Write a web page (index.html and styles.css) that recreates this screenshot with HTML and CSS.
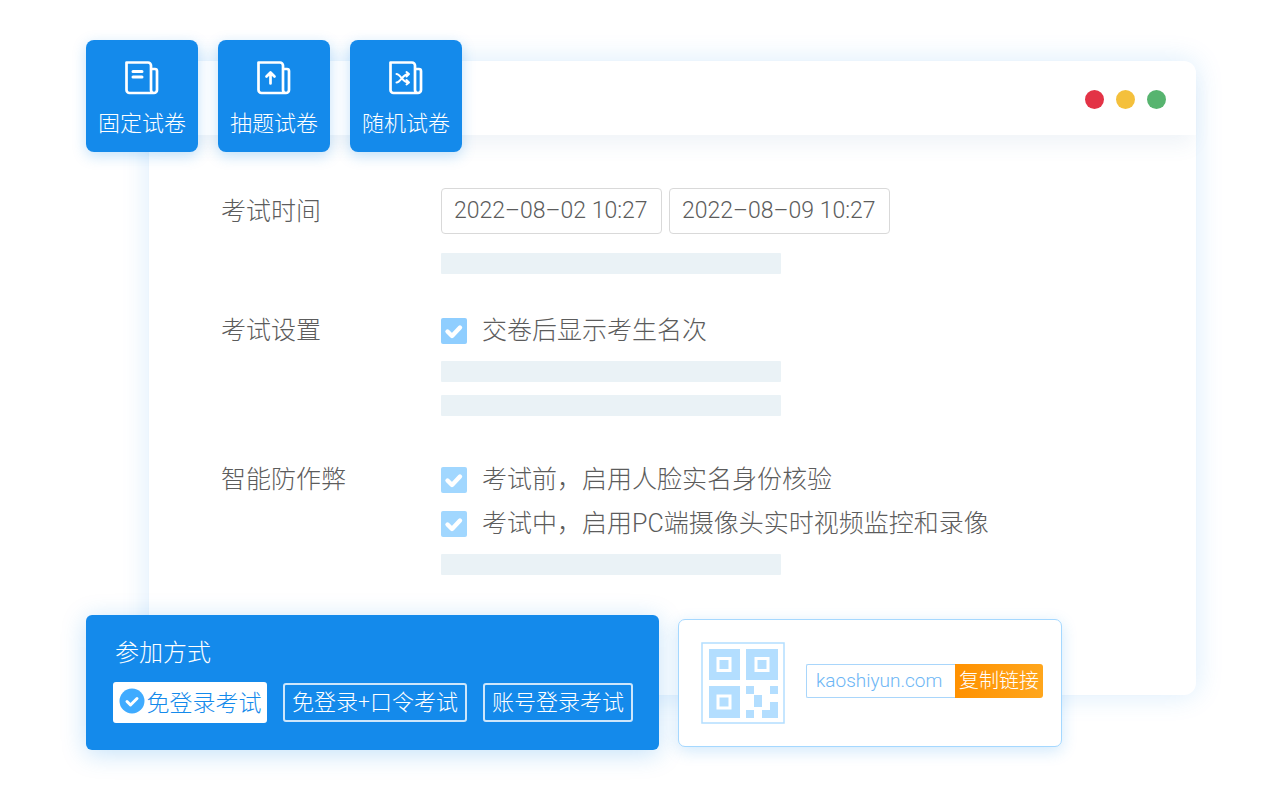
FILE: index.html
```html
<!DOCTYPE html>
<html lang="zh-CN">
<head>
<meta charset="utf-8">
<meta name="viewport" content="width=device-width, initial-scale=1">
<title>考试设置</title>
<link rel="stylesheet" href="styles.css">
</head>
<body>
<main class="scene">
  <nav class="tiles">
    <button type="button" class="tile">
      <svg class="tile-icon" viewBox="0 0 36 36" aria-hidden="true"><path d="M2.500 2.500H24a3 3 0 0 1 3 3V30a3 3 0 0 0 6 0V11a2 2 0 0 0-2-2h-4M2.500 2.500V30a3 3 0 0 0 3 3H30"/><path class="bold" d="M9 11.500h9M9 17h9"/></svg>
      <span>固定试卷</span>
    </button>
    <button type="button" class="tile">
      <svg class="tile-icon" viewBox="0 0 36 36" aria-hidden="true"><path d="M2.500 2.500H24a3 3 0 0 1 3 3V30a3 3 0 0 0 6 0V11a2 2 0 0 0-2-2h-4M2.500 2.500V30a3 3 0 0 0 3 3H30"/><path d="M14.500 23.500V13M10.500 16.500 14.500 12.500 18.500 16.500"/></svg>
      <span>抽题试卷</span>
    </button>
    <button type="button" class="tile">
      <svg class="tile-icon" viewBox="0 0 36 36" aria-hidden="true"><path d="M2.500 2.500H24a3 3 0 0 1 3 3V30a3 3 0 0 0 6 0V11a2 2 0 0 0-2-2h-4M2.500 2.500V30a3 3 0 0 0 3 3H30"/><path class="fine" d="M8.500 14c4 0 6 8.500 12 8.500M8.500 22.500c4.500 0 6-8.500 12-8.500M18.500 12l2.500 2-2.500 2.500M18.500 20l2.500 2.500-2.500 2"/></svg>
      <span>随机试卷</span>
    </button>
  </nav>

  <section class="window">
    <header class="window-bar">
      <span class="dot dot-red"></span>
      <span class="dot dot-yellow"></span>
      <span class="dot dot-green"></span>
    </header>
    <form class="form">
      <div class="row">
        <label class="row-label" for="start">考试时间</label>
        <div class="row-body">
          <div class="dates">
            <input class="date" id="start" type="text" value="2022–08–02 10:27">
            <input class="date" type="text" value="2022–08–09 10:27" aria-label="结束时间">
          </div>
          <div class="bar bar-far"></div>
        </div>
      </div>
      <div class="row">
        <span class="row-label">考试设置</span>
        <div class="row-body">
          <label class="check">
            <span class="box"><input type="checkbox" checked><svg viewBox="0 0 26 26" aria-hidden="true"><path d="M6.500 13.500l4.500 4.500L19 9.500"/></svg></span>
            <span>交卷后显示考生名次</span>
          </label>
          <div class="bar bar-near"></div>
          <div class="bar bar-next"></div>
        </div>
      </div>
      <div class="row">
        <span class="row-label">智能防作弊</span>
        <div class="row-body">
          <label class="check check-pale">
            <span class="box"><input type="checkbox" checked><svg viewBox="0 0 26 26" aria-hidden="true"><path d="M6.500 13.500l4.500 4.500L19 9.500"/></svg></span>
            <span>考试前，启用人脸实名身份核验</span>
          </label>
          <label class="check check-pale check-second">
            <span class="box"><input type="checkbox" checked><svg viewBox="0 0 26 26" aria-hidden="true"><path d="M6.500 13.500l4.500 4.500L19 9.500"/></svg></span>
            <span>考试中，启用PC端摄像头实时视频监控和录像</span>
          </label>
          <div class="bar bar-near"></div>
        </div>
      </div>
    </form>
  </section>

  <div class="cards">
    <fieldset class="modes">
      <legend class="modes-title">参加方式</legend>
      <div class="mode-list">
        <label class="mode mode-active">
          <input type="radio" name="mode" checked>
          <svg class="mode-icon" viewBox="0 0 26 26" aria-hidden="true"><circle cx="13" cy="13" r="12.500"/><path d="M8 13.500l3.500 3.500L18 10.500"/></svg>
          <span>免登录考试</span>
        </label>
        <label class="mode mode-wide"><input type="radio" name="mode"><span>免登录+口令考试</span></label>
        <label class="mode"><input type="radio" name="mode"><span>账号登录考试</span></label>
      </div>
    </fieldset>
    <section class="share">
      <svg class="qr" viewBox="0 0 84 82" role="img" aria-label="二维码">
        <rect class="frame" x="1" y="1" width="82" height="80"/>
        <path d="M8 7h31v31H8zM45 7h32v31H45zM8 44h31v32H8zM45 44h8v8h-8zM69 44h8v8h-8zM53 53h8v12h-8zM45 68h8v8h-8zM69 60h8v16H61v-8h8z"/>
        <path class="ring" d="M17 16.500h12v12H17zM55 16.500h12v12H55zM17 54h12v12H17z"/>
      </svg>
      <div class="link">
        <input class="link-url" type="text" value="kaoshiyun.com" aria-label="考试链接">
        <button type="button" class="link-copy">复制链接</button>
      </div>
    </section>
  </div>
</main>
</body>
</html>
```

FILE: styles.css
```css
* {
  box-sizing: border-box;
}

body {
  margin: 0;
  background: #fff;
  color: #5c5c5c;
  font-family: "Noto Sans CJK SC", sans-serif;
  font-size: 24px;
  font-weight: 300;
  line-height: 26px;
}

button,
input {
  font: inherit;
  color: inherit;
  margin: 0;
}

.scene {
  padding: 40px 84px;
}

.tiles {
  position: relative;
  z-index: 1;
  display: flex;
  gap: 20px;
  padding-left: 2px;
}

.tile {
  display: flex;
  flex-direction: column;
  align-items: center;
  gap: 11px;
  width: 112px;
  padding: 20px 0 17px;
  border: 0;
  border-radius: 8px;
  background: #148aeb;
  color: #fff;
  font-size: 22px;
  line-height: 28px;
  box-shadow: 0 4px 14px rgba(20, 138, 235, 0.25);
}

.tile-icon {
  width: 36px;
  height: 36px;
  fill: none;
  stroke: #fff;
  stroke-width: 2.7;
  stroke-linecap: round;
  stroke-linejoin: round;
}

.tile-icon .bold {
  stroke-width: 3;
}

.tile-icon .fine {
  stroke-width: 2;
}

.window {
  margin-top: -91px;
  margin-left: 65px;
  border-radius: 12px;
  background: #fff;
  box-shadow: 0 0 28px rgba(20, 138, 235, 0.16);
}

.window-bar {
  display: flex;
  justify-content: flex-end;
  align-items: center;
  gap: 12px;
  padding: 29px 30px 26px;
  border-radius: 12px 12px 0 0;
  box-shadow: 0 14px 20px -4px rgba(60, 110, 170, 0.08);
}

.dot {
  width: 19px;
  height: 19px;
  border-radius: 50%;
}

.dot-red {
  background: #e33346;
}

.dot-yellow {
  background: #f4c03c;
}

.dot-green {
  background: #57b46f;
}

.form {
  display: grid;
  gap: 44px;
  padding: 53px 72px 120px;
}

.row {
  display: grid;
  grid-template-columns: 220px 1fr;
}

.row:last-child {
  padding-top: 7px;
}

.row-label,
.check {
  font-family: Roboto, "Noto Sans CJK SC", sans-serif;
  font-size: 25px;
  line-height: 26px;
}

.row:first-child .row-label {
  padding-top: 11px;
}

.dates {
  display: flex;
  gap: 7px;
}

.date {
  width: 221px;
  height: 46px;
  padding: 0 11px 2px 12px;
  border: 1px solid #d9d9d9;
  border-radius: 4px;
  background: #fff;
  font-family: Roboto, "Liberation Sans", sans-serif;
  font-size: 23px;
}

.bar {
  max-width: 340px;
  height: 21px;
  border-radius: 1px;
  background: #eaf2f6;
}

.bar-far {
  margin-top: 19px;
}

.bar-near {
  margin-top: 17px;
}

.bar-next {
  margin-top: 13px;
}

.check {
  display: flex;
  gap: 15px;
}

.check-second {
  margin-top: 18px;
}

.box {
  display: grid;
  flex: none;
  width: 26px;
  height: 26px;
}

.box > * {
  grid-area: 1 / 1;
}

.box input {
  appearance: none;
  width: 26px;
  height: 26px;
  border-radius: 2px;
  background: #8fceff;
}

.check-pale .box input {
  background: #a1d7ff;
}

.box svg {
  fill: none;
  stroke: #fff;
  stroke-width: 4.4;
  stroke-linecap: round;
  stroke-linejoin: round;
  pointer-events: none;
}

.cards {
  position: relative;
  display: flex;
  flex-wrap: wrap;
  align-items: center;
  gap: 19px;
  margin-top: -80px;
  padding-left: 2px;
}

.modes {
  min-width: 0;
  margin: 0;
  padding: 23px 26px 27px 27px;
  border: 0;
  border-radius: 6px;
  background: #148aeb;
  color: #fff;
  box-shadow: 0 4px 24px rgba(20, 138, 235, 0.25);
}

.modes-title {
  float: left;
  width: 100%;
  padding: 0 2px;
}

.mode-list {
  clear: both;
  display: flex;
  flex-wrap: wrap;
  align-items: center;
  gap: 16px;
  padding-top: 18px;
}

.mode {
  display: flex;
  justify-content: center;
  width: 150px;
  padding: 2px 0 7px;
  border: 2px solid #cde6fb;
  border-radius: 3px;
  font-size: 22px;
  line-height: 26px;
}

.mode input {
  appearance: none;
  width: 0;
  height: 0;
}

.mode-wide {
  width: 184px;
}

.mode-active {
  align-items: center;
  gap: 2px;
  width: 154px;
  padding: 4px 2px 7px 0;
  border-color: #fff;
  background: #fff;
  color: #148aeb;
  font-size: 23px;
}

.mode-icon {
  width: 26px;
  height: 26px;
  fill: #3fabff;
}

.mode-icon path {
  fill: none;
  stroke: #fff;
  stroke-width: 3;
  stroke-linecap: round;
  stroke-linejoin: round;
}

.share {
  display: flex;
  align-items: center;
  gap: 21px;
  padding: 22px 18px 22px 22px;
  border: 1px solid #a5d8ff;
  border-radius: 7px;
  background: #fff;
  box-shadow: 0 4px 16px rgba(20, 138, 235, 0.2);
}

.qr {
  flex: none;
  width: 84px;
  height: 82px;
  fill: #b3deff;
}

.qr .frame {
  fill: none;
  stroke: #b3deff;
  stroke-width: 1.5;
}

.qr .ring {
  fill: none;
  stroke: #fff;
  stroke-width: 3;
}

.link {
  display: flex;
  padding-bottom: 4px;
}

.link-url {
  width: 149px;
  height: 34px;
  padding: 0 9px;
  border: 1px solid #a9d6fb;
  border-right: 0;
  border-radius: 2px 0 0 2px;
  background: #fff;
  color: #6db6f5;
  font-family: Roboto, sans-serif;
  font-size: 19px;
}

.link-copy {
  width: 88px;
  height: 34px;
  padding: 0 0 2px;
  border: 0;
  border-radius: 0 3px 3px 0;
  background: linear-gradient(90deg, #ff9100, #ffa61c);
  color: #fff;
  font-size: 20px;
  line-height: 30px;
}
```
